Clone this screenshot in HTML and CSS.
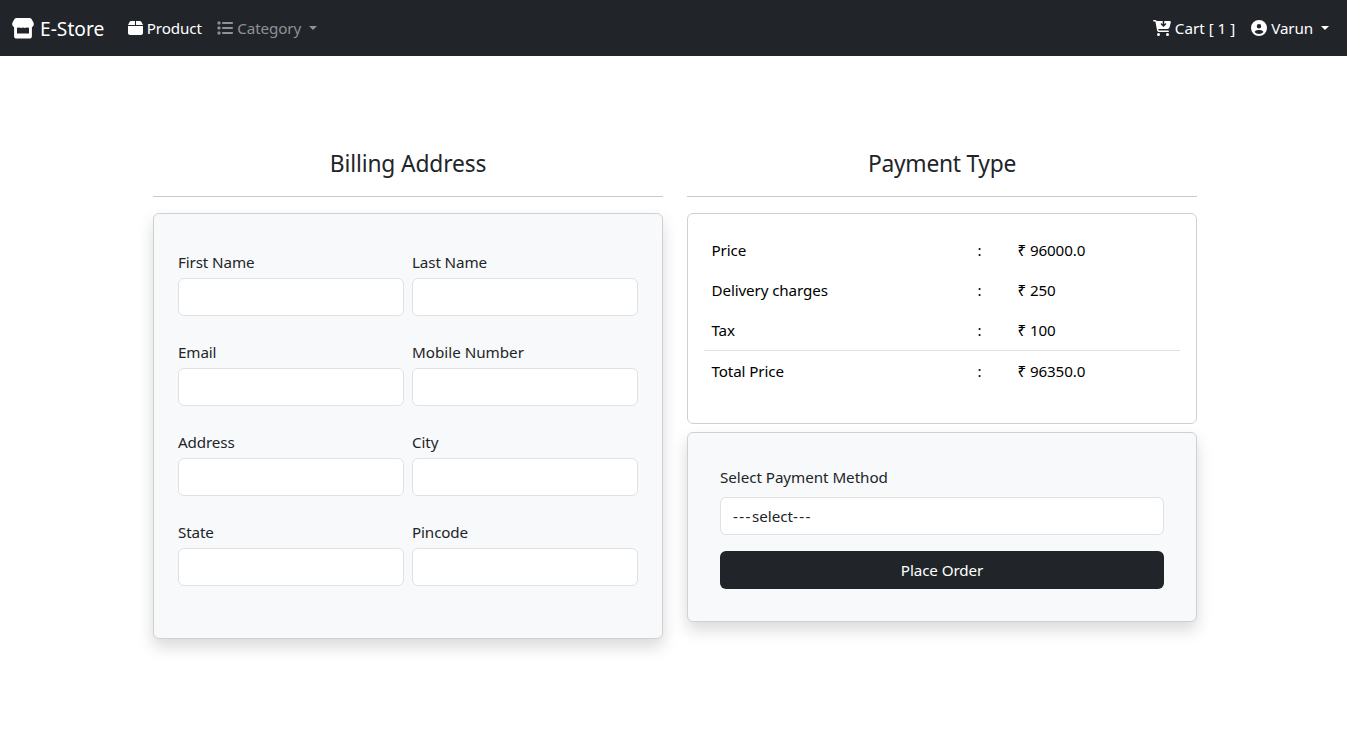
FILE: index.html
```html
<!DOCTYPE html>
<html lang="en">
<head>
<meta charset="utf-8">
<title>E-Store</title>
<link rel="stylesheet" href="styles.css">
</head>
<body>
<nav class="navbar">
  <a class="brand"><svg class="i-store" viewBox="0 0 22 21"><path d="M4.500 0H17.500Q18.800 0 19.500 1.100L21.500 4.500Q22.600 8 19.900 9.200V18Q19.900 20.600 17.300 20.600H4.700Q2.100 20.600 2.100 18V9.200Q-.6 8 .5 4.500L2.500 1.100Q3.200 0 4.500 0ZM5 9.800V15.500H17V9.800L14.700 9.400L12.900 10L11 9.400L9.100 10L7.300 9.400Z" fill-rule="evenodd"/></svg><span>E-Store</span></a>
  <a class="link product"><svg class="i-box" viewBox="0 0 448 512" preserveAspectRatio="none"><path d="M50.700 58.500L0 160H208V32H93.500C75.400 32 58.900 42.300 50.700 58.500zM240 160H448L397.300 58.500C389.100 42.300 372.600 32 354.500 32H240V160zm208 32H0V416c0 35.300 28.700 64 64 64H384c35.300 0 64-28.700 64-64V192z"/></svg><span>Product</span></a>
  <a class="link muted"><svg class="i16" viewBox="0 0 512 512"><path d="M40 48C26.700 48 16 58.700 16 72v48c0 13.300 10.700 24 24 24H88c13.300 0 24-10.700 24-24V72c0-13.300-10.700-24-24-24H40zM192 64c-17.700 0-32 14.300-32 32s14.300 32 32 32H480c17.700 0 32-14.300 32-32s-14.300-32-32-32H192zm0 160c-17.700 0-32 14.300-32 32s14.300 32 32 32H480c17.700 0 32-14.300 32-32s-14.300-32-32-32H192zm0 160c-17.700 0-32 14.300-32 32s14.300 32 32 32H480c17.700 0 32-14.300 32-32s-14.300-32-32-32H192zM16 232v48c0 13.300 10.700 24 24 24H88c13.300 0 24-10.700 24-24V232c0-13.300-10.700-24-24-24H40c-13.300 0-24 10.700-24 24zM40 368c-13.300 0-24 10.700-24 24v48c0 13.300 10.700 24 24 24H88c13.300 0 24-10.700 24-24V392c0-13.300-10.700-24-24-24H40z"/></svg><span>Category</span><i class="caret"></i></a>
  <span class="spacer"></span>
  <a class="link cart"><svg class="i18" viewBox="0 0 576 512"><path d="M24 0C10.700 0 0 10.700 0 24S10.700 48 24 48H69.500c3.800 0 7.100 2.700 7.900 6.500l51.600 271c6.500 34 36.200 58.500 70.700 58.500H488c13.300 0 24-10.700 24-24s-10.700-24-24-24H199.700c-11.500 0-21.400-8.200-23.600-19.500L170.700 288H459.200c32.600 0 61.100-21.800 69.500-53.300l41-152.300C576.600 57 557.400 32 531.100 32H360V134.100l23-23c9.400-9.400 24.600-9.400 33.900 0s9.400 24.600 0 33.900l-64 64c-9.400 9.400-24.600 9.400-33.900 0l-64-64c-9.400-9.400-9.400-24.600 0-33.900s24.600-9.400 33.900 0l23 23V32H120.100C111 12.800 91.600 0 69.500 0H24zM176 512a48 48 0 1 0 0-96 48 48 0 1 0 0 96zm336-48a48 48 0 1 0 -96 0 48 48 0 1 0 96 0z"/></svg><span>Cart [ 1 ]</span></a>
  <a class="link last"><svg class="i16" viewBox="0 0 512 512"><path d="M399 384.200C376.900 345.800 335.400 320 288 320H224c-47.400 0-88.900 25.800-111 64.200c35.200 39.200 86.200 63.800 143 63.800s107.800-24.700 143-63.800zM0 256a256 256 0 1 1 512 0A256 256 0 1 1 0 256zm256 16a72 72 0 1 0 0-144 72 72 0 1 0 0 144z"/></svg><span>Varun</span><i class="caret"></i></a>
</nav>
<main class="row">
  <section class="col">
    <h4>Billing Address</h4>
    <hr>
    <form class="card light shadow form">
      <label><span>First Name</span><input></label><label><span>Last Name</span><input></label>
      <label><span>Email</span><input></label><label><span class="wide">Mobile Number</span><input></label>
      <label><span>Address</span><input></label><label><span>City</span><input></label>
      <label><span>State</span><input></label><label><span>Pincode</span><input></label>
    </form>
  </section>
  <section class="col">
    <h4 class="payment">Payment Type</h4>
    <hr>
    <div class="card prices">
      <div class="price"><span>Price</span><span>:</span><span>₹ 96000.0</span></div>
      <div class="price"><span>Delivery charges</span><span>:</span><span>₹ 250</span></div>
      <div class="price"><span>Tax</span><span>:</span><span>₹ 100</span></div>
      <div class="price total"><span>Total Price</span><span>:</span><span>₹ 96350.0</span></div>
    </div>
    <div class="card light shadow method">
      <div class="method-label">Select Payment Method</div>
      <div class="select"><span class="dash">---</span>select<span class="dash">---</span></div>
      <button class="order">Place Order</button>
    </div>
  </section>
</main>
</body>
</html>
```
FILE: styles.css
```css
*{box-sizing:border-box}
body{margin:0;min-height:100vh;background:#fff;color:#212529;font:15.2px/24px "Segoe UI","Noto Sans",sans-serif;letter-spacing:-.12px}
.navbar{height:56px;background:#212529;display:flex;align-items:center;padding:0 12px}
svg{fill:currentColor;flex:none}
.brand,.link{display:flex;align-items:center;color:#fff;white-space:nowrap}
.brand{font-size:19.2px;line-height:30px;letter-spacing:0;margin-right:24px;padding-top:1px}
.i-store{width:22px;height:21px;margin-right:6px}
.i-box{width:15px;height:16px;margin-right:3.500px}
.i16{width:16px;height:16px;margin-right:4px}
.i18{width:18px;height:16px;margin-right:4px}
.link{margin-right:16px}
.product{margin-right:15.5px}
.cart{letter-spacing:0}
.last{margin-right:6px}
.muted{color:#909294}
.caret{border:4.8px solid transparent;border-top-color:currentColor;border-bottom:0;margin-left:8px}
.spacer{flex:1}
.row{display:grid;grid-template-columns:510px 510px;gap:24px;margin:0 0 0 153px;padding:92px 0 60px}
h4{margin:0 0 16px;font-size:22.8px;line-height:32px;font-weight:400;text-align:center;letter-spacing:-.15px}
.payment{letter-spacing:-.27px}
hr{margin:0 0 16px;border:0;border-top:1px solid #c7c8c9}
.card{border:1px solid #cfd0d1;border-radius:6px;background:#fff}
.light{background:#f8f9fa}
.shadow{box-shadow:0 8px 16px rgba(0,0,0,.15)}
.form{height:426px;padding:36px 24px;display:grid;grid-template-columns:226px 226px;column-gap:8px;grid-auto-rows:90px;align-content:start}
label{display:flex;flex-direction:column;gap:4px}
.wide{letter-spacing:0}
input{height:38px;width:100%;border:1px solid #dee2e6;border-radius:6px;background:#fff;padding:6px 12px;font:inherit}
.prices{height:211px;padding:16px;color:#000}
.price{height:40px;display:grid;grid-template-columns:266px 40px 1fr;padding:8px 7.500px 0}
.total{border-top:1px solid #dee2e6;height:41px}
.method{margin-top:8px;height:190px;padding:32px}
.method-label{margin-bottom:8px;letter-spacing:-.05px}
.select{height:38px;border:1px solid #dee2e6;border-radius:6px;background:#fff;padding:6px 12px;letter-spacing:0}
.dash{letter-spacing:1.4px}
.order{margin-top:16px;width:100%;height:38px;border:0;border-radius:6px;background:#212529;color:#fff;font:inherit;letter-spacing:-.1px}
```
